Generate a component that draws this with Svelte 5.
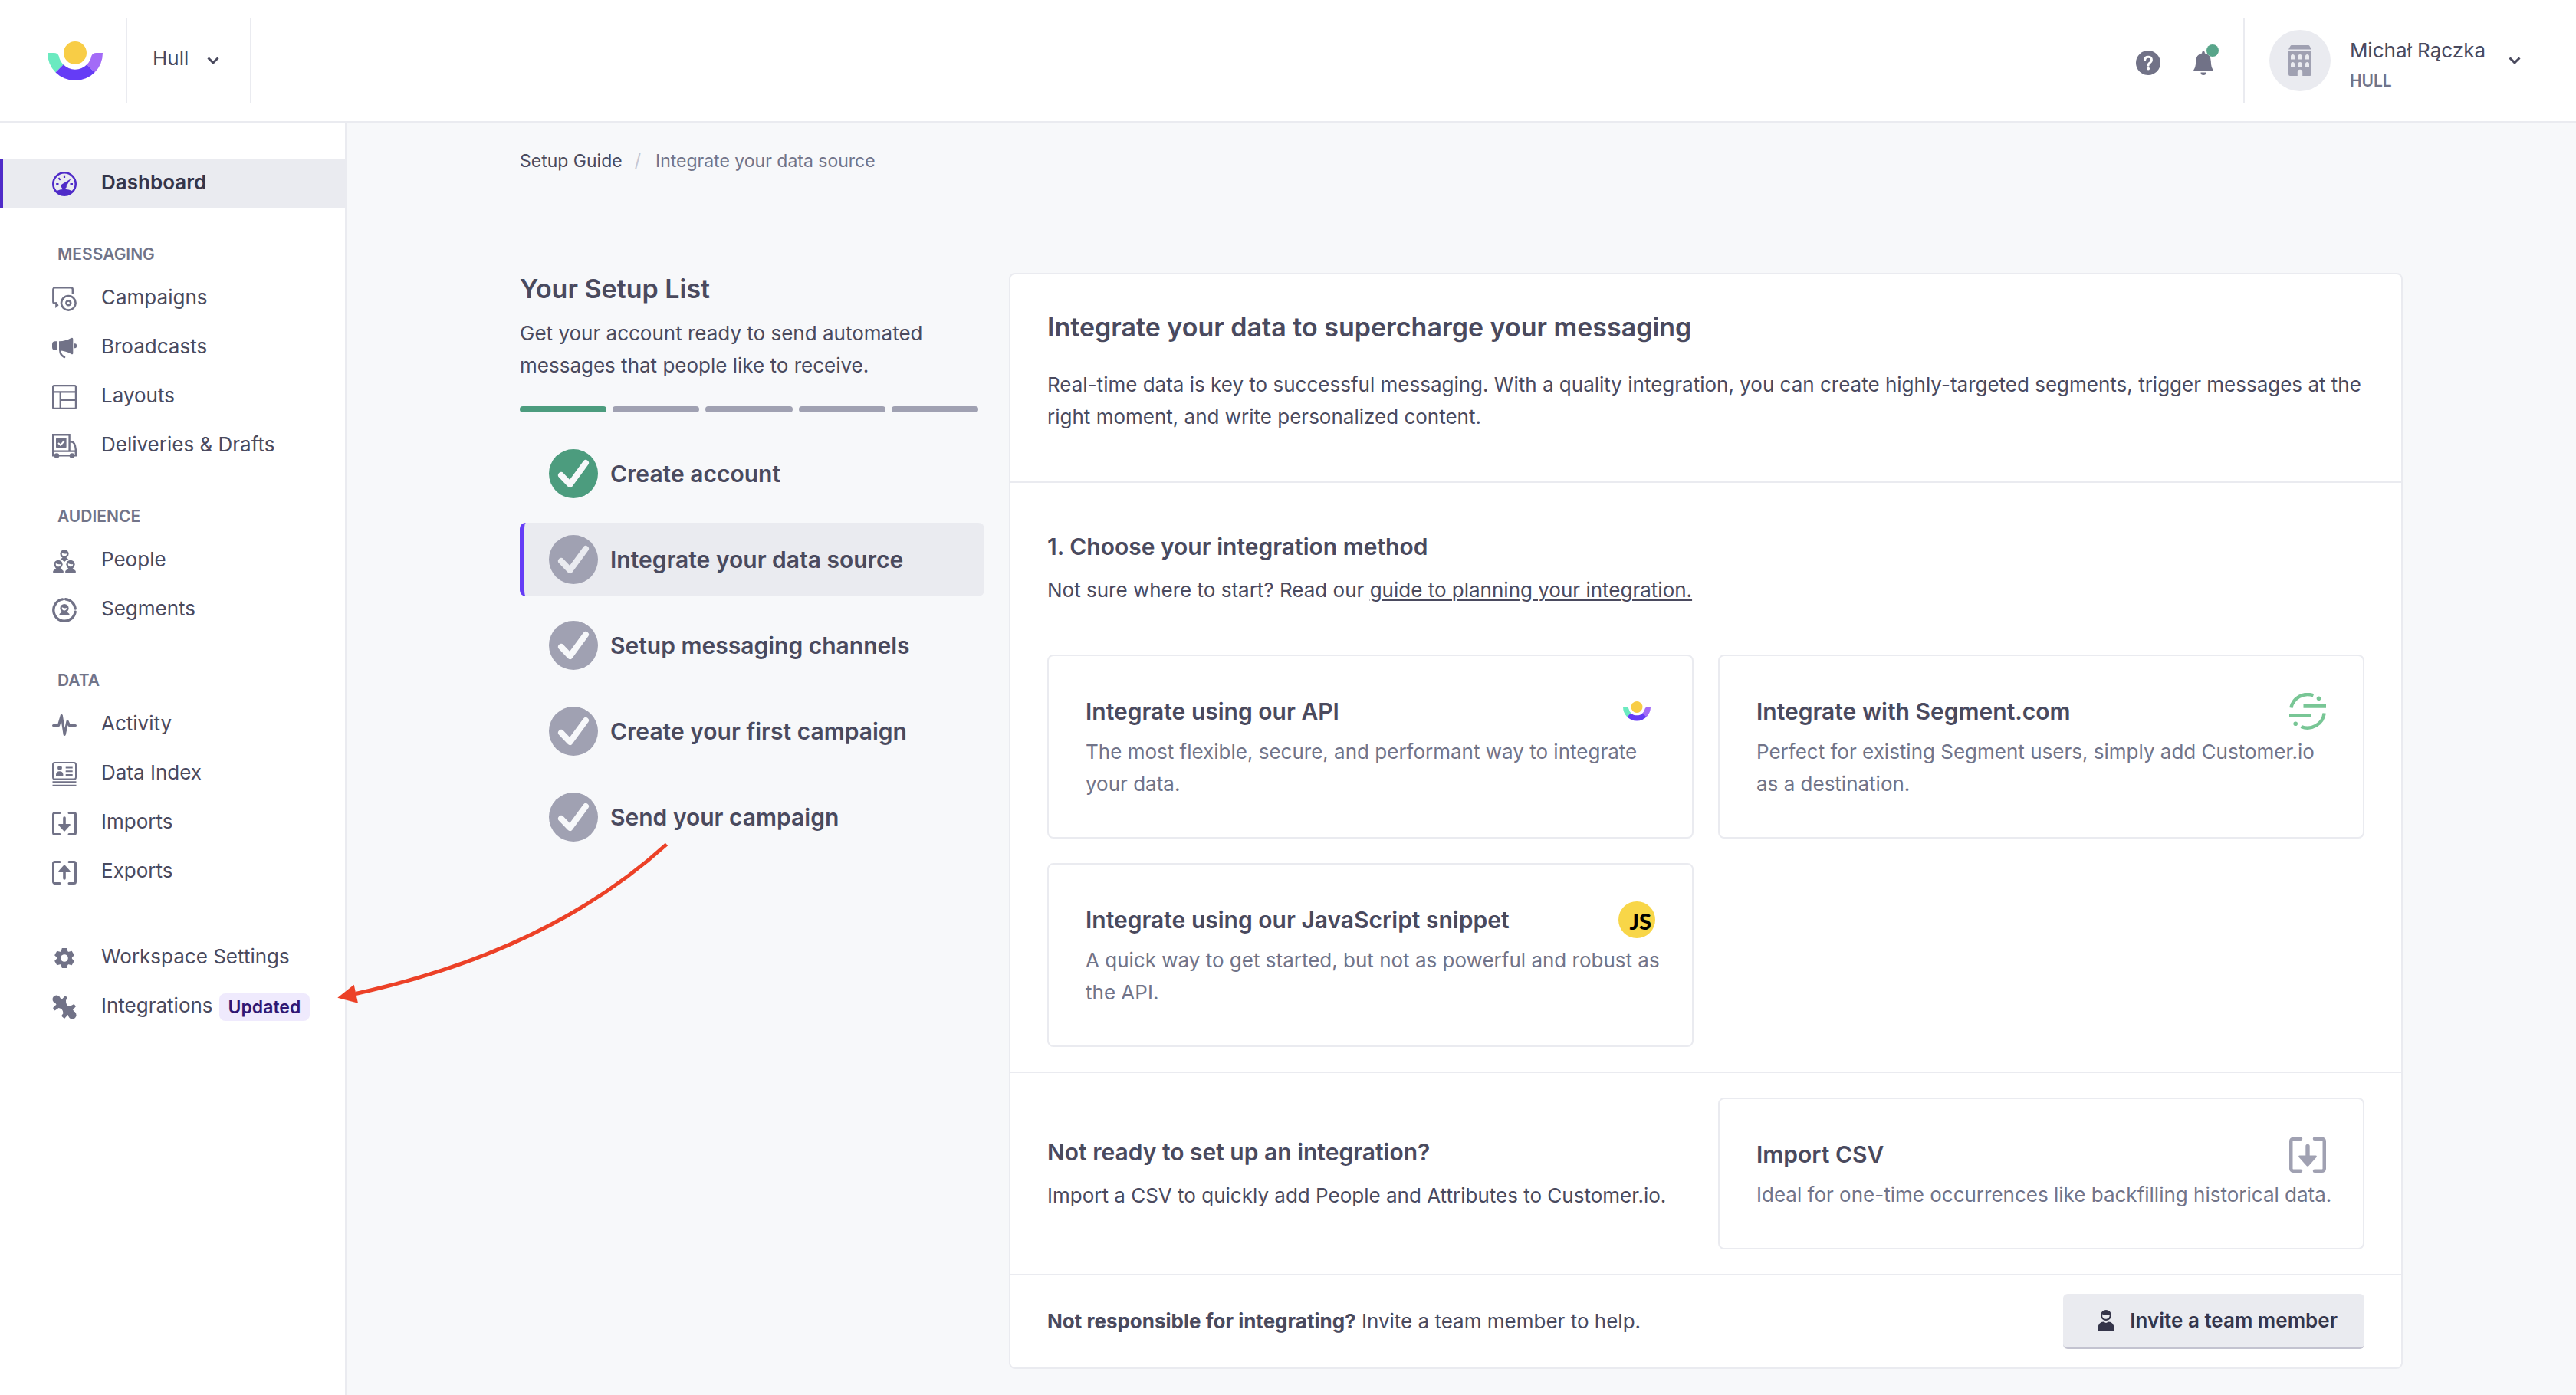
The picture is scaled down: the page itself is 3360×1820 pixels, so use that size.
<script>
  const navGroups = [
    { title: '', items: [{ label: 'Dashboard', icon: 'gauge', active: true }] },
    {
      title: 'MESSAGING',
      items: [
        { label: 'Campaigns', icon: 'campaigns' },
        { label: 'Broadcasts', icon: 'broadcasts' },
        { label: 'Layouts', icon: 'layouts' },
        { label: 'Deliveries & Drafts', icon: 'deliveries' }
      ]
    },
    {
      title: 'AUDIENCE',
      items: [
        { label: 'People', icon: 'people' },
        { label: 'Segments', icon: 'segments' }
      ]
    },
    {
      title: 'DATA',
      items: [
        { label: 'Activity', icon: 'activity' },
        { label: 'Data Index', icon: 'index' },
        { label: 'Imports', icon: 'imports' },
        { label: 'Exports', icon: 'exports' }
      ]
    },
    {
      title: '',
      items: [
        { label: 'Workspace Settings', icon: 'gear' },
        { label: 'Integrations', icon: 'integrations', badge: 'Updated' }
      ]
    }
  ];

  const steps = [
    { label: 'Create account', done: true },
    { label: 'Integrate your data source', current: true },
    { label: 'Setup messaging channels' },
    { label: 'Create your first campaign' },
    { label: 'Send your campaign' }
  ];

  const methods = [
    {
      title: 'Integrate using our API',
      text: 'The most flexible, secure, and performant way to integrate your data.',
      icon: 'logo'
    },
    {
      title: 'Integrate with Segment.com',
      text: 'Perfect for existing Segment users, simply add Customer.io as a destination.',
      icon: 'segment'
    },
    {
      title: 'Integrate using our JavaScript snippet',
      text: 'A quick way to get started, but not as powerful and robust as the API.',
      icon: 'js'
    }
  ];
</script>

{#snippet logo()}
  <svg class="logo" viewBox="0 0 72 52" aria-hidden="true">
    <circle cx="36" cy="15" r="15" fill="#f8cd46" />
    <path d="M0 15H8.500Q13 15 14.700 19A21.600 21.600 0 0 0 20.700 30.300L10.500 40.500A36 36 0 0 1 0 15Z" fill="#6beac0" />
    <path d="M72 15H63.500Q59 15 57.300 19A21.600 21.600 0 0 1 51.300 30.300L61.500 40.500A36 36 0 0 0 72 15Z" fill="#a36bf7" />
    <path d="M10.500 40.500A36 36 0 0 0 61.500 40.500L51.300 30.300A21.600 21.600 0 0 1 20.700 30.300Z" fill="#653cf6" />
  </svg>
{/snippet}

{#snippet chevron()}
  <svg class="chevron" viewBox="0 0 16 10" aria-hidden="true">
    <path d="M1.500 1.500L8 7.800 14.500 1.500" fill="none" stroke="currentColor" stroke-width="3" />
  </svg>
{/snippet}

{#snippet download()}
  <path d="M10 2.500H3.500A2 2 0 0 0 1.500 4.500V28.500A2 2 0 0 0 3.500 30.500H10M22 2.500H28.500A2 2 0 0 1 30.500 4.500V28.500A2 2 0 0 1 28.500 30.500H22" fill="none" stroke="currentColor" stroke-width="3" stroke-linecap="round" />
  <path d="M16 9V19" stroke="currentColor" stroke-width="3.600" stroke-linecap="round" />
  <path d="M9 17H23Q24.500 17.200 23.500 18.700L17 26Q16 27 15 26L8.500 18.700Q7.500 17.200 9 17Z" fill="currentColor" />
{/snippet}

{#snippet bust(x, y)}
  <g transform="translate({x} {y})">
    <circle cx="0" cy="0" r="5.600" fill="currentColor" />
    <path d="M-3.200 -1.200Q0 0.600 3.200 -0.400A3.300 3.300 0 0 1 -3.200 0.800Z" fill="#fff" />
  </g>
{/snippet}

{#snippet navIcon(name)}
  <svg class="nav-icon" viewBox="0 0 32 32" aria-hidden="true">
    {#if name === 'gauge'}
      <circle cx="16" cy="16" r="14.700" fill="none" stroke="currentColor" stroke-width="2.600" />
      <path d="M4.500 25.500Q16 20 27.500 25.500A15 15 0 0 1 4.500 25.500Z" fill="currentColor" />
      <path d="M24.500 9.200L18.800 18.500A3.500 3.500 0 1 1 13.800 15.800Z" fill="currentColor" />
      <path d="M16 4.800V8M5.200 16H8.500M23.500 16H27M8.300 8.300L10.800 10.800" stroke="currentColor" stroke-width="2.200" />
    {:else if name === 'campaigns'}
      <path d="M26.800 9V3.700A2.400 2.400 0 0 0 24.400 1.300H3.700A2.400 2.400 0 0 0 1.300 3.700V19.500A2 2 0 0 0 3.300 21.500H6" fill="none" stroke="currentColor" stroke-width="2.400" />
      <path d="M4.200 20.400H6.500L8.500 24.500 4.200 28Z" fill="currentColor" />
      <circle cx="21.300" cy="21.300" r="9.300" fill="none" stroke="currentColor" stroke-width="2.600" />
      <circle cx="21.300" cy="21.300" r="2.900" fill="none" stroke="currentColor" stroke-width="2.600" />
    {:else if name === 'broadcasts'}
      <path d="M7 7.300H4A4 4 0 0 0 0 11.300V15A4 4 0 0 0 4 19H7Z" fill="currentColor" />
      <path d="M9 7.300Q18 7 25 3Q27.300 2.200 27.300 4.500V22.800Q27.300 25 25 24Q18 19.800 9 19.300Z" fill="currentColor" />
      <path d="M29 10.200H30A2 2 0 0 1 32 12V14.500A2 2 0 0 1 30 16.300H29Z" fill="currentColor" />
      <path d="M10.400 19.500Q10.500 25.500 16 28" fill="none" stroke="currentColor" stroke-width="2.600" stroke-linecap="round" />
    {:else if name === 'layouts'}
      <rect x="1.100" y="1.100" width="29.800" height="29.800" rx="1.500" fill="none" stroke="currentColor" stroke-width="2.200" />
      <path d="M1 9.300H31M10.700 9.300V31M10.700 20H31" fill="none" stroke="currentColor" stroke-width="2.200" />
    {:else if name === 'deliveries'}
      <path d="M1.200 1.200H22.600V22.500M1.200 0V28.300H30.800V20.500Q30 10.200 24.500 10.200H22.600M1.200 22.600H31" fill="none" stroke="currentColor" stroke-width="2.400" />
      <rect x="5" y="5" width="13.600" height="13.600" rx="1.500" fill="currentColor" />
      <path d="M8 12L11 14.800 16 9" fill="none" stroke="#fff" stroke-width="2" />
      <circle cx="6" cy="28.600" r="3.300" fill="currentColor" />
      <circle cx="26" cy="28.600" r="3.300" fill="currentColor" />
    {:else if name === 'people'}
      {@render bust(16, 6.6)}
      <path d="M14 11H18L22 14.500H19L16 17 13 14.500H10Z" fill="currentColor" />
      {@render bust(8, 20.3)}
      <path d="M6 24.500H10L14.800 29V31H1.200V29Z" fill="currentColor" />
      {@render bust(24, 20.3)}
      <path d="M22 24.500H26L30.800 29V31H17.200V29Z" fill="currentColor" />
    {:else if name === 'segments'}
      <path d="M13.500 1.900A14.300 14.300 0 1 0 30.200 18.300" fill="none" stroke="currentColor" stroke-width="3.400" stroke-linecap="round" />
      <path d="M17.500 1.700A14.300 14.300 0 0 1 30.200 14" fill="none" stroke="currentColor" stroke-width="3.400" stroke-linecap="round" />
      {@render bust(16, 13.5)}
      <path d="M14 17H18L22.500 21V22.800H9.500V21Z" fill="currentColor" />
    {:else if name === 'activity'}
      <path d="M1.600 16.500H8.500L12.300 3.500 16.200 28.500 20 11 22.500 16.500H30.400" fill="none" stroke="currentColor" stroke-width="3.200" stroke-linecap="round" stroke-linejoin="round" />
    {:else if name === 'index'}
      <rect x="1" y="1" width="30" height="21.600" rx="2.500" fill="none" stroke="currentColor" stroke-width="2" />
      <path d="M0.500 26.200H31.500M0.500 30.800H31.500" stroke="currentColor" stroke-width="2" />
      <circle cx="10" cy="7.800" r="2.900" fill="currentColor" />
      <path d="M5 18.500V16.500Q5.500 12.300 9.700 12.300Q14 12.300 14.400 16.500V18.500Z" fill="currentColor" />
      <path d="M17.700 7.500H26.700M17.700 12.200H26.700M17.700 17H26.700" stroke="currentColor" stroke-width="2" />
    {:else if name === 'imports'}
      {@render download()}
    {:else if name === 'exports'}
      <g transform="translate(0 33) scale(1 -1)">{@render download()}</g>
    {:else if name === 'gear'}
      <g fill="currentColor">
        {#each [0, 60, 120] as turn}
          <path d="M12.800 3H19.200L20.500 8V24L19.200 29H12.800L11.500 24V8Z" transform="rotate({turn} 16 16)" />
        {/each}
        <circle cx="16" cy="16" r="9.800" />
      </g>
      <circle cx="16" cy="16" r="4.800" fill="#fff" />
    {:else}
      <path d="M1 17L5.500 12.500 3 9 9 3 12.500 6 17.300 1 20 4 18 7Q17.500 14 23 15L28.500 12 31 15 27 19.500 30 23 24 29 20.500 26 16 31 12 27.500 14.500 24Q14 17.500 8.500 17L3.500 20.500Z" fill="currentColor" />
      <circle cx="5.700" cy="5.700" r="5.200" fill="currentColor" />
      <circle cx="26.300" cy="26.300" r="5.200" fill="currentColor" />
    {/if}
  </svg>
{/snippet}

<div class="app">
  <header class="topbar">
    <a class="brand" href="#home" aria-label="Home">{@render logo()}</a>
    <button class="workspace" type="button">Hull {@render chevron()}</button>

    <div class="tools">
      <button class="tool" type="button" aria-label="Help">
        <svg class="help" viewBox="0 0 32 32" aria-hidden="true">
          <circle cx="16" cy="16" r="16" fill="currentColor" />
          <path d="M11.800 12.300Q11.800 8.300 16.200 8.300T20.500 12.300Q20.500 14.500 18.200 16T16.200 19.300" fill="none" stroke="#fff" stroke-width="2.900" stroke-linecap="round" />
          <circle cx="16.200" cy="23.600" r="1.900" fill="#fff" />
        </svg>
      </button>
      <button class="tool notify" type="button" aria-label="Notifications">
        <svg class="bell" viewBox="0 0 26 32" aria-hidden="true">
          <path d="M11.200 2.500A1.800 1.800 0 0 1 14.800 2.500V3.500Q22.500 5 22.800 14Q23 22 25.800 25.500V27H0.200V25.500Q3 22 3.200 14Q3.500 5 11.200 3.500Z" fill="currentColor" />
          <path d="M9.500 28.500H16.500A3.500 3.500 0 0 1 9.500 28.500Z" fill="currentColor" />
        </svg>
        <span class="dot"></span>
      </button>
    </div>

    <button class="account" type="button">
      <span class="avatar">
        <svg class="building" viewBox="0 0 30 40" aria-hidden="true">
          <path d="M4 0H26Q27 0 27.500 1L30 5.400H0L2.500 1Q3 0 4 0Z" fill="#a0a1b2" />
          <path fill-rule="evenodd" d="M0 8H30V38A2 2 0 0 1 28 40H18.200V35A3.200 3.200 0 0 0 11.800 35V40H2A2 2 0 0 1 0 38ZM3 18.500H8V14.500A2.500 2.500 0 0 0 3 14.500ZM12.500 18.500H17.500V14.500A2.500 2.500 0 0 0 12.500 14.500ZM22 18.500H27V14.500A2.500 2.500 0 0 0 22 14.500ZM3 28.500H8V24.500A2.500 2.500 0 0 0 3 24.500ZM12.500 28.500H17.500V24.500A2.500 2.500 0 0 0 12.500 24.500ZM22 28.500H27V24.500A2.500 2.500 0 0 0 22 24.500Z" fill="#a0a1b2" />
        </svg>
      </span>
      <span class="who">
        <span class="name">Michał Rączka</span>
        <span class="org">HULL</span>
      </span>
      {@render chevron()}
    </button>
  </header>

  <div class="body">
    <nav class="sidebar" aria-label="Main">
      {#each navGroups as group}
        <div class="group" class:titled={group.title}>
          {#if group.title}<h2>{group.title}</h2>{/if}
          <ul>
            {#each group.items as item}
              <li>
                <a href="#{item.icon}" class:active={item.active}>
                  {@render navIcon(item.icon)}
                  <span>{item.label}</span>
                  {#if item.badge}<span class="badge">{item.badge}</span>{/if}
                </a>
              </li>
            {/each}
          </ul>
        </div>
      {/each}
    </nav>

    <main>
      <div class="content">
        <nav class="crumbs" aria-label="Breadcrumb">
          <a href="#setup">Setup Guide</a>
          <span class="slash">/</span>
          <span>Integrate your data source</span>
        </nav>

        <div class="columns">
          <section class="setup">
            <h1>Your Setup List</h1>
            <p>Get your account ready to send automated messages that people like to receive.</p>
            <div class="progress">
              {#each steps as step}<span class:done={step.done}></span>{/each}
            </div>
            <ol>
              {#each steps as step}
                <li>
                  <a href="#step" class:current={step.current} class:done={step.done}>
                    <svg class="check" viewBox="0 0 64 64" aria-hidden="true">
                      <circle cx="32" cy="32" r="32" fill="currentColor" stroke="none" />
                      <path d="M16 34L27.500 46 48 18" fill="none" stroke-width="8" stroke-linecap="round" stroke-linejoin="round" />
                    </svg>
                    <span>{step.label}</span>
                  </a>
                </li>
              {/each}
            </ol>
          </section>

          <section class="panel">
            <div class="intro">
              <h1>Integrate your data to supercharge your messaging</h1>
              <p>Real-time data is key to successful messaging. With a quality integration, you can create highly-targeted segments, trigger messages at the right moment, and write personalized content.</p>
            </div>

            <div class="methods">
              <h2>1. Choose your integration method</h2>
              <p>Not sure where to start? Read our <a href="#guide">guide to planning your integration.</a></p>
              <div class="grid">
                {#each methods as method}
                  <a class="card" href="#{method.icon}">
                    <span class="card-head">
                      <strong>{method.title}</strong>
                      {#if method.icon === 'logo'}
                        <span class="small-logo">{@render logo()}</span>
                      {:else if method.icon === 'segment'}
                        <svg class="card-icon" viewBox="0 0 48 48" aria-hidden="true">
                          <path d="M2.300 19.500A22 22 0 0 1 31.500 3.400" fill="none" stroke="#78c695" stroke-width="4.400" />
                          <path d="M45.700 26.500A22 22 0 0 1 15.500 44" fill="none" stroke="#78c695" stroke-width="4.400" />
                          <path d="M18.500 17.200H48M0 29.400H29" stroke="#78c695" stroke-width="5" />
                          <circle cx="38.500" cy="7.200" r="2.800" fill="#78c695" />
                          <circle cx="8.200" cy="40.200" r="2.800" fill="#78c695" />
                        </svg>
                      {:else}
                        <span class="js">JS</span>
                      {/if}
                    </span>
                    <span class="card-text">{method.text}</span>
                  </a>
                {/each}
              </div>
            </div>

            <div class="import">
              <div>
                <h2>Not ready to set up an integration?</h2>
                <p>Import a CSV to quickly add People and Attributes to Customer.io.</p>
              </div>
              <a class="card" href="#csv">
                <span class="card-head">
                  <strong>Import CSV</strong>
                  <svg class="card-icon csv" viewBox="0 0 32 32" aria-hidden="true">{@render download()}</svg>
                </span>
                <span class="card-text">Ideal for one-time occurrences like backfilling historical data.</span>
              </a>
            </div>

            <div class="invite">
              <p><strong>Not responsible for integrating?</strong> Invite a team member to help.</p>
              <button type="button">
                <svg class="person" viewBox="0 0 22 28" aria-hidden="true">
                  <circle cx="11" cy="7" r="7" fill="currentColor" />
                  <path d="M6.200 5.500Q10.500 7.800 15.800 6.600A5 5.300 0 0 1 6.200 8.500Z" fill="#eaebf0" />
                  <path d="M0 28V24Q1.500 15.500 7.500 15.500L11 17 14.500 15.500Q20.500 15.500 22 24V28Z" fill="currentColor" />
                </svg>
                Invite a team member
              </button>
            </div>
          </section>
        </div>
      </div>
    </main>
  </div>

  <svg class="pointer" viewBox="0 0 480 240" aria-hidden="true">
    <path d="M449.500 16.500Q296 156 44 211.500" fill="none" stroke="#ec4127" stroke-width="5" />
    <path d="M20.300 216.700L41.700 199.700 47 223.700Z" fill="#ec4127" />
  </svg>
</div>

<style>
  :global(body) {
    margin: 0;
    background: #f7f8fa;
  }

  .app {
    position: relative;
    display: flex;
    flex-direction: column;
    min-height: 100vh;
    color: #4a4a5e;
    font-family: Inter, "Liberation Sans", sans-serif;
    font-size: 26px;
    line-height: 42px;
  }

  .app :is(h1, h2, p, ul, ol) {
    margin: 0;
    padding: 0;
    list-style: none;
  }

  a {
    color: inherit;
    text-decoration: none;
  }

  button {
    border: 0;
    background: none;
    color: inherit;
    font: inherit;
    cursor: pointer;
  }

  svg {
    display: block;
    flex: none;
  }

  h1 {
    font-size: 34px;
    font-weight: 600;
  }

  h2,
  .card strong {
    font-size: 30px;
    font-weight: 600;
  }

  /* Top bar */
  .topbar {
    display: flex;
    align-items: stretch;
    min-height: 110px;
    padding: 24px 72px 24px 62px;
    border-bottom: 2px solid #eaebf0;
    background: #fff;
  }

  .brand {
    padding: 30px 30px 0 0;
  }

  .logo {
    width: 72px;
    height: 52px;
  }

  .workspace {
    display: flex;
    align-items: center;
    gap: 24px;
    padding: 0 40px 6px 33px;
    border: solid #eaebf0;
    border-width: 0 2px;
  }

  .chevron {
    width: 16px;
    height: 10px;
  }

  .workspace .chevron {
    margin-top: 6px;
  }

  .tools {
    display: flex;
    align-items: center;
    gap: 43px;
    margin-left: auto;
    padding: 6px 39px 0 0;
    color: #717287;
  }

  .tool {
    position: relative;
    padding: 0;
  }

  .help {
    width: 32px;
    height: 32px;
  }

  .bell {
    width: 26px;
    height: 32px;
  }

  .dot {
    position: absolute;
    top: -8px;
    right: -7px;
    width: 16px;
    height: 16px;
    border-radius: 50%;
    background: #58a58a;
  }

  .account {
    display: flex;
    align-items: center;
    padding: 0 0 0 32px;
    border-left: 2px solid #eaebf0;
    text-align: left;
  }

  .avatar {
    display: grid;
    place-items: center;
    width: 80px;
    height: 80px;
    border-radius: 50%;
    background: #eaebf0;
  }

  .building {
    width: 30px;
    height: 40px;
  }

  .who {
    display: flex;
    flex-direction: column;
    margin: 0 30px 0 25px;
    padding-top: 13px;
    line-height: 40px;
  }

  .org {
    color: #717489;
    font-size: 21px;
    font-weight: 600;
  }

  /* Sidebar */
  .body {
    display: flex;
    flex: 1;
  }

  .sidebar {
    flex: none;
    width: 450px;
    padding-top: 48px;
    border-right: 2px solid #eaebf0;
    background: #fff;
  }

  .group {
    margin-bottom: 46px;
  }

  .group.titled:nth-last-child(2) {
    margin-bottom: 48px;
  }

  .sidebar h2 {
    padding: 0 0 12px 75px;
    color: #717489;
    font-size: 21px;
    font-weight: 600;
    line-height: 28px;
  }

  .sidebar a {
    display: flex;
    align-items: center;
    height: 64px;
    padding-left: 68px;
  }

  .sidebar a > span {
    padding-bottom: 4px;
  }

  .sidebar a.active {
    padding-left: 64px;
    border-left: 4px solid #4f2bc8;
    background: #eaebf0;
    color: #35354a;
    font-weight: 600;
  }

  .nav-icon {
    width: 32px;
    height: 32px;
    margin-right: 32px;
    color: #717287;
  }

  .active .nav-icon {
    color: #4f2bc8;
  }

  .sidebar a > .badge {
    margin-left: 8px;
    padding: 0 12px;
    border-radius: 8px;
    background: #efeafd;
    color: #2f1773;
    font-size: 23px;
    font-weight: 600;
    line-height: 36px;
  }

  /* Main area */
  main {
    flex: 1;
    padding: 32px 48px;
  }

  .content {
    max-width: 2456px;
    margin: 0 auto;
  }

  .crumbs {
    display: flex;
    gap: 16px;
    margin-bottom: 128px;
    color: #717489;
    font-size: 23px;
    line-height: 36px;
  }

  .crumbs a {
    color: #4a4a5e;
  }

  .slash {
    margin-right: 3px;
    color: #c5c6d1;
  }

  .columns {
    display: grid;
    grid-template-columns: 1fr 3fr;
    align-items: start;
    gap: 32px;
  }

  .setup p {
    margin: 16px 0 32px;
    padding-right: 48px;
  }

  .progress {
    display: flex;
    gap: 8px;
    margin: 0 8px 32px 0;
  }

  .progress span {
    flex: 1;
    height: 8px;
    border-radius: 4px;
    background: #a0a1b2;
  }

  .progress .done {
    background: #4c9c7e;
  }

  .setup ol {
    display: grid;
    gap: 16px;
  }

  .setup li a {
    display: flex;
    align-items: center;
    gap: 16px;
    padding: 16px 16px 16px 32px;
    border-left: 6px solid transparent;
    border-radius: 8px;
    font-size: 30px;
    font-weight: 600;
  }

  .setup li .current {
    border-color: #653cf6;
    background: #eaebf0;
  }

  .check {
    width: 64px;
    height: 64px;
    color: #a0a1b2;
    stroke: #f7f8fa;
  }

  .current .check {
    stroke: #eaebf0;
  }

  .done .check {
    color: #4c9c7e;
  }

  .panel {
    border: 2px solid #eaebf0;
    border-radius: 8px;
    background: #fff;
  }

  .panel > div + div {
    border-top: 2px solid #eaebf0;
  }

  .intro {
    padding: 48px 48px 63px;
  }

  .intro p {
    margin-top: 33px;
  }

  .methods {
    padding: 62px 48px 32px;
  }

  .methods p {
    margin: 15px 0 63px;
  }

  .methods p a {
    text-decoration: underline;
    text-decoration-thickness: 2px;
    text-underline-offset: 3px;
  }

  .grid,
  .import {
    display: grid;
    grid-template-columns: 1fr 1fr;
    gap: 32px;
  }

  .card {
    display: block;
    padding: 48px 36px 48px 48px;
    border: 2px solid #eaebf0;
    border-radius: 8px;
  }

  .card-head {
    display: flex;
    align-items: center;
    justify-content: space-between;
    height: 48px;
    margin-bottom: 8px;
    padding-right: 12px;
  }

  .card-icon {
    width: 48px;
    height: 48px;
  }

  .csv {
    color: #a0a1b2;
  }

  .small-logo {
    padding-right: 6px;
  }

  .small-logo .logo {
    width: 36px;
    height: 26px;
  }

  .js {
    box-sizing: border-box;
    width: 48px;
    height: 48px;
    padding: 2px 5px 0 0;
    border-radius: 50%;
    background: #f8d648;
    color: #000;
    font-family: Lato, sans-serif;
    font-size: 29px;
    font-weight: 900;
    line-height: 48px;
    text-align: right;
  }

  .card-text {
    display: block;
    color: #717489;
  }

  .import {
    align-items: center;
    padding: 32px 48px;
  }

  .import p {
    margin-top: 15px;
  }

  .invite {
    display: flex;
    align-items: center;
    justify-content: space-between;
    padding: 24px 48px;
  }

  .invite strong {
    font-weight: 700;
  }

  .invite button {
    display: flex;
    align-items: center;
    gap: 20px;
    height: 72px;
    padding: 0 35px 0 45px;
    border-bottom: 2px solid #c3c3d0;
    border-radius: 6px;
    background: #eaebf0;
    color: #35354a;
    font-weight: 600;
  }

  .person {
    width: 22px;
    height: 28px;
  }

  /* Annotation arrow drawn over the page */
  .pointer {
    position: absolute;
    top: 1085px;
    left: 420px;
    width: 480px;
    height: 240px;
    pointer-events: none;
  }
</style>
